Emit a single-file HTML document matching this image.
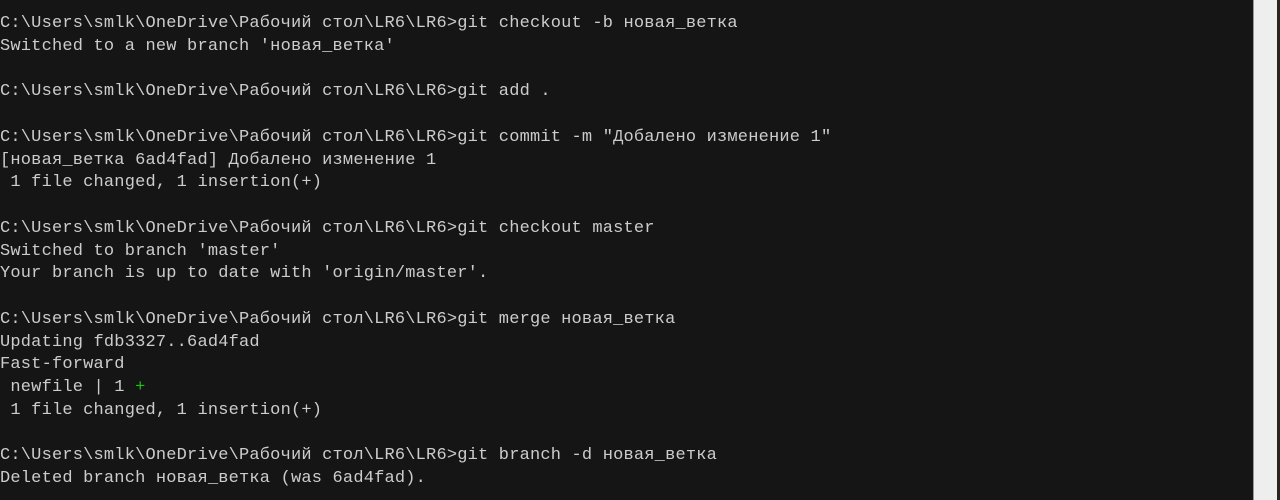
<!DOCTYPE html>
<html><head><meta charset="utf-8"><style>
html,body{margin:0;padding:0;width:1280px;height:500px;overflow:hidden;background:#151515;}
pre{position:absolute;left:0;top:13px;margin:0;font-family:"Liberation Mono","DejaVu Sans Mono",monospace;font-size:17px;line-height:22.75px;color:#cccccc;letter-spacing:0.19px;}
.g{color:#16c60c}
.strip{position:absolute;left:1253px;top:0;width:24px;height:500px;background:#eeeeef;border-left:1px solid #999;}
.edge{position:absolute;left:1277px;top:0;width:3px;height:500px;background:#2a2320;}
</style></head><body>
<pre>C:\Users\smlk\OneDrive\Рабочий стол\LR6\LR6&gt;git checkout -b новая_ветка
Switched to a new branch 'новая_ветка'

C:\Users\smlk\OneDrive\Рабочий стол\LR6\LR6&gt;git add .

C:\Users\smlk\OneDrive\Рабочий стол\LR6\LR6&gt;git commit -m "Добалено изменение 1"
[новая_ветка 6ad4fad] Добалено изменение 1
 1 file changed, 1 insertion(+)

C:\Users\smlk\OneDrive\Рабочий стол\LR6\LR6&gt;git checkout master
Switched to branch 'master'
Your branch is up to date with 'origin/master'.

C:\Users\smlk\OneDrive\Рабочий стол\LR6\LR6&gt;git merge новая_ветка
Updating fdb3327..6ad4fad
Fast-forward
 newfile | 1 <span class="g">+</span>
 1 file changed, 1 insertion(+)

C:\Users\smlk\OneDrive\Рабочий стол\LR6\LR6&gt;git branch -d новая_ветка
Deleted branch новая_ветка (was 6ad4fad).</pre>
<div class="strip"></div><div class="edge"></div>
</body></html>
